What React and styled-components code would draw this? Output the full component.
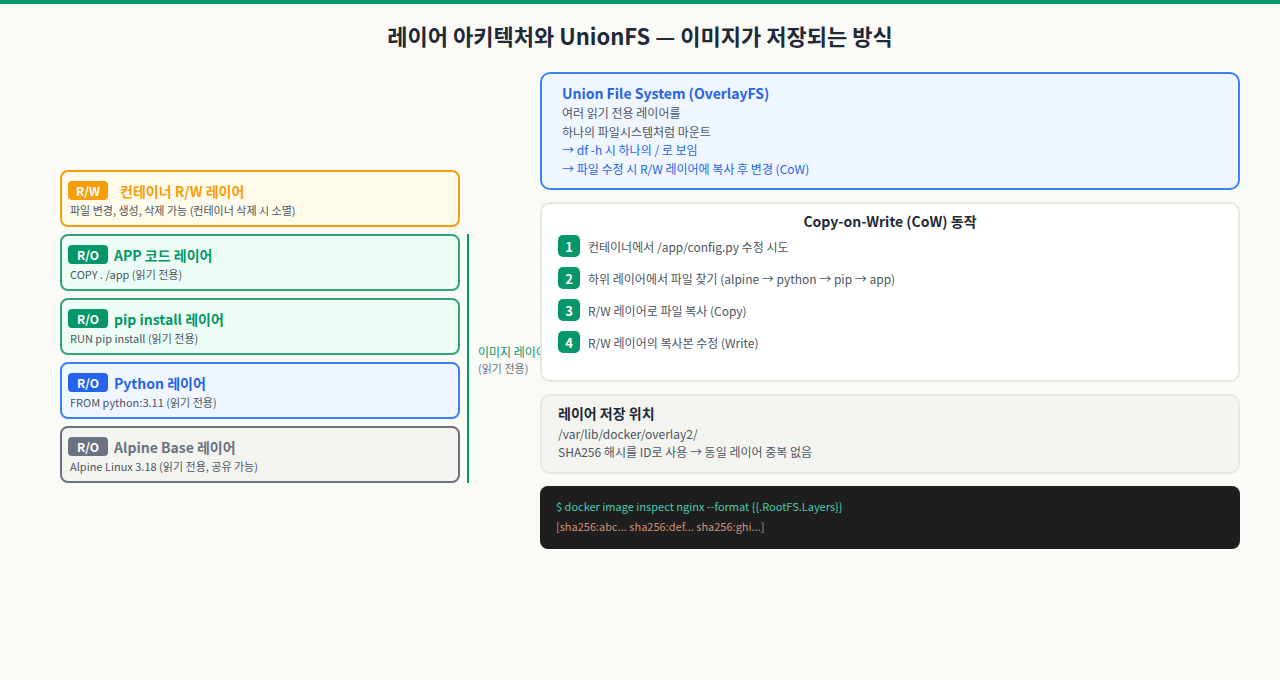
import React from 'react';
import styled, { createGlobalStyle } from 'styled-components';

const GlobalStyle = createGlobalStyle`
  body {
    margin: 0;
    background: #fafaf7;
    font-family: "Noto Sans CJK KR", "Noto Sans", sans-serif;
    color: #1f2937;
  }
`;

const Page = styled.div`
  border-top: 4px solid #059669;
  height: 676px;
  box-sizing: border-box;
`;

const Title = styled.h1`
  margin: 0;
  padding-top: 16px;
  text-align: center;
  font-size: 22px;
  font-weight: 700;
  line-height: 30px;
  color: #1f2937;
`;

const Body = styled.div`
  display: grid;
  grid-template-columns: 400px 700px;
  gap: 80px;
  padding: 22px 0 0 60px;
  align-items: start;
`;

const LeftCol = styled.div`
  display: flex;
  flex-direction: column;
  gap: 7px;
  margin-top: 98px;
`;

const ImageGroup = styled.div`
  position: relative;
  display: flex;
  flex-direction: column;
  gap: 7px;
`;

const Bracket = styled.div`
  position: absolute;
  left: 407px;
  top: 0;
  bottom: 0;
  width: 2px;
  background: #059669;
`;

const BracketLabel = styled.div`
  position: absolute;
  left: 418px;
  top: 110px;
  width: 62px;
  overflow: hidden;
  white-space: nowrap;
  font-size: 12px;
  line-height: 16px;
  color: #059669;
  span { display: block; color: #6b7280; font-size: 11px; }
`;

const themes = {
  rw: { border: '#f59e0b', bg: '#fffbeb', color: '#f59e0b' },
  app: { border: '#34a37a', bg: '#ecfdf5', color: '#059669' },
  py: { border: '#3b82f6', bg: '#eff6ff', color: '#2563eb' },
  base: { border: '#6b7280', bg: '#f3f4ef', color: '#6b7280' },
};

const Layer = styled.div`
  height: 57px;
  box-sizing: border-box;
  border: 2px solid ${p => themes[p.$t].border};
  background: ${p => themes[p.$t].bg};
  border-radius: 8px;
  padding: 8px 6px 0;
`;

const LayerHead = styled.div`
  display: flex;
  align-items: center;
  gap: ${p => (p.$wide ? 12 : 6)}px;
  height: 21px;
`;

const Badge = styled.span`
  display: inline-flex;
  align-items: center;
  justify-content: center;
  width: 40px;
  height: 19px;
  border-radius: 4px;
  background: ${p => themes[p.$t].color};
  color: #fff;
  font-size: 12px;
  font-weight: 700;
`;

const LayerName = styled.span`
  font-size: 14px;
  font-weight: 700;
  color: ${p => themes[p.$t].color};
`;

const LayerDesc = styled.div`
  font-size: 11px;
  color: #4b5563;
  margin: 1px 0 0 2px;
`;

const RightCol = styled.div`
  display: flex;
  flex-direction: column;
  gap: 12px;
`;

const UnionBox = styled.div`
  border: 2px solid #3b82f6;
  background: #eff6ff;
  border-radius: 10px;
  padding: 8px 20px 10px;
  font-size: 12px;
  line-height: 18.5px;
  color: #4b5563;
`;

const BoxTitle = styled.div`
  font-size: 14px;
  font-weight: 700;
  line-height: 22px;
  color: ${p => p.$color || '#1f2937'};
  text-align: ${p => (p.$center ? 'center' : 'left')};
  margin-bottom: ${p => p.$mb || 0}px;
`;

const Blue = styled.div`
  color: #2563eb;
`;

const CowBox = styled.div`
  height: 180px;
  box-sizing: border-box;
  background: #fff;
  border: 2px solid #e7e7e2;
  border-radius: 10px;
  padding: 6px 16px;
`;

const Steps = styled.div`
  display: flex;
  flex-direction: column;
  gap: 10px;
  margin-top: 1px;
`;

const Step = styled.div`
  display: flex;
  align-items: center;
  gap: 8px;
  font-size: 12px;
  color: #4b5563;
`;

const Num = styled.span`
  display: inline-flex;
  align-items: center;
  justify-content: center;
  width: 22px;
  height: 22px;
  border-radius: 5px;
  background: #059669;
  color: #fff;
  font-size: 13px;
  font-weight: 700;
`;

const StoreBox = styled.div`
  height: 80px;
  box-sizing: border-box;
  background: #f3f4ef;
  border: 2px solid #e7e7e2;
  border-radius: 10px;
  padding: 6px 16px;
  font-size: 12px;
  line-height: 18px;
  color: #4b5563;
`;

const Terminal = styled.div`
  height: 63px;
  box-sizing: border-box;
  background: #1e1e1e;
  border-radius: 8px;
  padding: 10px 16px;
  font-size: 11px;
  line-height: 20px;
`;

const Cmd = styled.div`
  color: ${p => p.$color};
`;

const imageLayers = [
  { t: 'app', name: 'APP 코드 레이어', desc: 'COPY . /app (읽기 전용)' },
  { t: 'app', name: 'pip install 레이어', desc: 'RUN pip install (읽기 전용)' },
  { t: 'py', name: 'Python 레이어', desc: 'FROM python:3.11 (읽기 전용)' },
  { t: 'base', name: 'Alpine Base 레이어', desc: 'Alpine Linux 3.18 (읽기 전용, 공유 가능)' },
];

const steps = [
  '컨테이너에서 /app/config.py 수정 시도',
  '하위 레이어에서 파일 찾기 (alpine → python → pip → app)',
  'R/W 레이어로 파일 복사 (Copy)',
  'R/W 레이어의 복사본 수정 (Write)',
];

export default function App() {
  return (
    <Page>
      <GlobalStyle />
      <Title>레이어 아키텍처와 UnionFS — 이미지가 저장되는 방식</Title>
      <Body>
        <LeftCol>
          <Layer $t="rw">
            <LayerHead $wide>
              <Badge $t="rw">R/W</Badge>
              <LayerName $t="rw">컨테이너 R/W 레이어</LayerName>
            </LayerHead>
            <LayerDesc>파일 변경, 생성, 삭제 가능 (컨테이너 삭제 시 소멸)</LayerDesc>
          </Layer>
          <ImageGroup>
            {imageLayers.map(l => (
              <Layer key={l.name} $t={l.t}>
                <LayerHead>
                  <Badge $t={l.t}>R/O</Badge>
                  <LayerName $t={l.t}>{l.name}</LayerName>
                </LayerHead>
                <LayerDesc>{l.desc}</LayerDesc>
              </Layer>
            ))}
            <Bracket />
            <BracketLabel>
              이미지 레이어
              <span>(읽기 전용)</span>
            </BracketLabel>
          </ImageGroup>
        </LeftCol>
        <RightCol>
          <UnionBox>
            <BoxTitle $color="#2563eb">Union File System (OverlayFS)</BoxTitle>
            <div>여러 읽기 전용 레이어를</div>
            <div>하나의 파일시스템처럼 마운트</div>
            <Blue>→ df -h 시 하나의 / 로 보임</Blue>
            <Blue>→ 파일 수정 시 R/W 레이어에 복사 후 변경 (CoW)</Blue>
          </UnionBox>
          <CowBox>
            <BoxTitle $center $mb={3}>Copy-on-Write (CoW) 동작</BoxTitle>
            <Steps>
              {steps.map((s, i) => (
                <Step key={s}>
                  <Num>{i + 1}</Num>
                  {s}
                </Step>
              ))}
            </Steps>
          </CowBox>
          <StoreBox>
            <BoxTitle $mb={1}>레이어 저장 위치</BoxTitle>
            <div>/var/lib/docker/overlay2/</div>
            <div>SHA256 해시를 ID로 사용 → 동일 레이어 중복 없음</div>
          </StoreBox>
          <Terminal>
            <Cmd $color="#4ec9b0">$ docker image inspect nginx --format {'{{.RootFS.Layers}}'}</Cmd>
            <Cmd $color="#ce9178">[sha256:abc... sha256:def... sha256:ghi...]</Cmd>
          </Terminal>
        </RightCol>
      </Body>
    </Page>
  );
}
